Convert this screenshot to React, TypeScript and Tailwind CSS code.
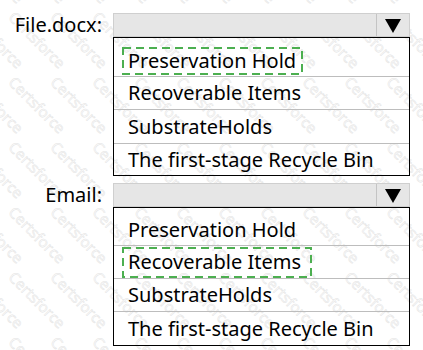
import React from 'react';

interface Section {
    label: string;
    items: string[];
    picked: number;
    box: { w: number; h: number };
}

const options = ['Preservation Hold', 'Recoverable Items', 'SubstrateHolds', 'The first-stage Recycle Bin'];

const sections: Section[] = [
    { label: 'File.docx:', items: options, picked: 0, box: { w: 181, h: 28 } },
    { label: 'Email:', items: options, picked: 1, box: { w: 190, h: 31 } },
];

const rowHeights = [
    ['h-[38px] pt-[8px]', 'h-[33px]', 'h-[34px]', 'h-[32px]'],
    ['h-[37px] pt-[6px]', 'h-[33px]', 'h-[33px]', 'h-[34px]'],
];

// watermark positions, tiled diagonally
const marks: { x: number; y: number }[] = [];
for (let r = -1; r < 7; r++) {
    for (let c = -1; c < 11; c++) {
        marks.push({ x: 37 + c * 42, y: 40 + r * 65 });
    }
}

const DropBar: React.FC = () => (
    <div className="w-[297px] h-[24px] flex bg-[#e6e6e6] border border-[#cfcfcf]">
        <div className="flex-1" />
        <div className="w-[33px] border-l border-[#c4c4c4] flex items-center justify-center pt-[2px]">
            <svg width="16" height="14" viewBox="0 0 16 14">
                <polygon points="0,0 16,0 8,14" fill="#000" />
            </svg>
        </div>
    </div>
);

const DashedBox: React.FC<{ w: number; h: number; children: React.ReactNode }> = ({ w, h, children }) => (
    <span className="relative flex items-center pl-[6px] -ml-[6px]" style={{ width: w, height: h }}>
        <svg className="absolute inset-0" width={w} height={h}>
            <rect x="1" y="1" width={w - 2} height={h - 2} fill="none" stroke="#4caf50" strokeWidth="2" strokeDasharray="8 5" />
        </svg>
        <span className="relative">{children}</span>
    </span>
);

export default function App() {
    return (
        <div
            className="relative w-[423px] h-[350px] overflow-hidden bg-white text-black"
            style={{ fontFamily: '"Noto Sans", "Open Sans", sans-serif' }}
        >
            {/* watermark, sits behind the form */}
            <div className="absolute inset-0 pointer-events-none">
                {marks.map((m, i) => (
                    <span
                        key={i}
                        className="absolute text-[15px] leading-none text-transparent [-webkit-text-stroke:0.5px_#e3e3e3] rotate-45 -translate-x-1/2 -translate-y-1/2 whitespace-nowrap"
                        style={{ left: m.x, top: m.y, fontFamily: '"Open Sans", sans-serif' }}
                    >
                        Certsforce
                    </span>
                ))}
            </div>

            <div className="relative pt-[13px] flex flex-col gap-[7px]">
                {sections.map((s, si) => (
                    <div key={s.label} className="flex flex-col">
                        <div className="flex items-center">
                            <div className="w-[113px] text-right text-[20px] leading-none pr-[11px]">{s.label}</div>
                            <DropBar />
                        </div>
                        <div className="ml-[113px] w-[297px] border border-black flex flex-col">
                            {s.items.map((it, i) => (
                                <div
                                    key={it}
                                    className={`flex items-center pl-[14px] text-[20px] ${i > 0 ? 'border-t border-[#bdbdbd]' : ''} ${rowHeights[si][i]}`}
                                >
                                    {i === s.picked ? (
                                        <DashedBox w={s.box.w} h={s.box.h}>{it}</DashedBox>
                                    ) : (
                                        <span>{it}</span>
                                    )}
                                </div>
                            ))}
                        </div>
                    </div>
                ))}
            </div>
        </div>
    );
}
